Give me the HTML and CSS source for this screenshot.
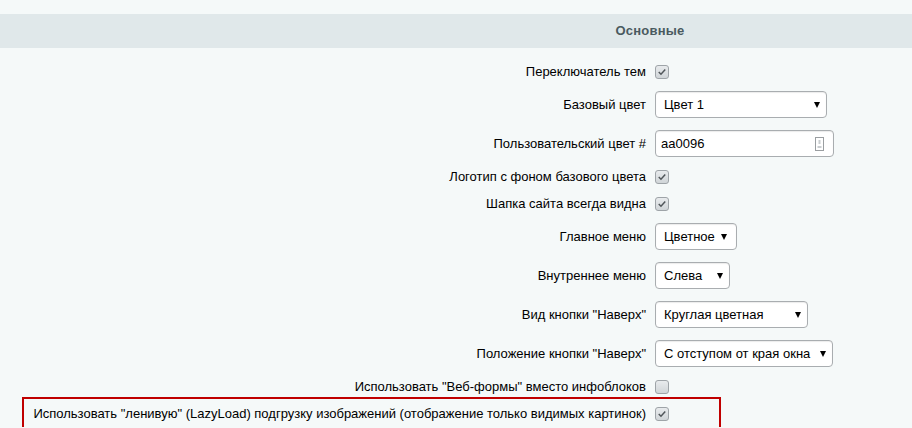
FILE: index.html
```html
<!DOCTYPE html>
<html lang="ru">
  <head>
    <meta charset="UTF-8" />
    <meta name="viewport" content="width=device-width, initial-scale=1.0" />
    <title>Настройки</title>
    <link rel="stylesheet" href="styles.css">
  </head>
  <body>
    <main class="settings">
      <div class="heading">Основные</div>

      <div class="row row-check">
        <div class="label">Переключатель тем</div>
        <div class="field"><span class="check checked"><svg viewBox="0 0 14 14"><path d="M3.2 7 L5.8 9.6 L10.8 4" /></svg></span></div>
      </div>
      <div class="row row-field">
        <div class="label">Базовый цвет</div>
        <div class="field"><div class="select w-base"><span>Цвет 1</span><i class="arrow"></i></div></div>
      </div>
      <div class="row row-field">
        <div class="label">Пользовательский цвет #</div>
        <div class="field">
          <div class="text-input">
            <span>aa0096</span>
            <svg class="picker" viewBox="0 0 9 14"><rect x="0.5" y="0.5" width="8" height="13" /><rect class="bar" x="3.5" y="3" width="2" height="4" /><path class="bar" d="M2.5 11 L2.5 9 L6.5 9 L6.5 11 Z" /></svg>
          </div>
        </div>
      </div>
      <div class="row row-check">
        <div class="label">Логотип с фоном базового цвета</div>
        <div class="field"><span class="check checked"><svg viewBox="0 0 14 14"><path d="M3.2 7 L5.8 9.6 L10.8 4" /></svg></span></div>
      </div>
      <div class="row row-check">
        <div class="label">Шапка сайта всегда видна</div>
        <div class="field"><span class="check checked"><svg viewBox="0 0 14 14"><path d="M3.2 7 L5.8 9.6 L10.8 4" /></svg></span></div>
      </div>
      <div class="row row-field">
        <div class="label">Главное меню</div>
        <div class="field"><div class="select w-main"><span>Цветное</span><i class="arrow"></i></div></div>
      </div>
      <div class="row row-field">
        <div class="label">Внутреннее меню</div>
        <div class="field"><div class="select w-inner"><span>Слева</span><i class="arrow"></i></div></div>
      </div>
      <div class="row row-field">
        <div class="label">Вид кнопки "Наверх"</div>
        <div class="field"><div class="select w-view"><span>Круглая цветная</span><i class="arrow"></i></div></div>
      </div>
      <div class="row row-field">
        <div class="label">Положение кнопки "Наверх"</div>
        <div class="field"><div class="select w-pos"><span>С отступом от края окна</span><i class="arrow"></i></div></div>
      </div>
      <div class="row row-check">
        <div class="label">Использовать "Веб-формы" вместо инфоблоков</div>
        <div class="field"><span class="check"></span></div>
      </div>
      <div class="row row-check marked">
        <div class="label">Использовать "ленивую" (LazyLoad) подгрузку изображений (отображение только видимых картинок)</div>
        <div class="field"><span class="check checked"><svg viewBox="0 0 14 14"><path d="M3.2 7 L5.8 9.6 L10.8 4" /></svg></span></div>
      </div>
    </main>
  </body>
</html>
```

FILE: styles.css
```css
* {
  margin: 0;
  padding: 0;
  box-sizing: border-box;
}

body {
  background-color: #f5f9f9;
  color: #000;
  font-family: "Liberation Sans", Arial, sans-serif;
  font-size: 13px;
  overflow: hidden;
}

.settings {
  padding-top: 14px;
}

.heading {
  height: 34px;
  line-height: 34px;
  padding-left: 388px;
  background-color: #e0e8ea;
  color: #4a5a60;
  font-weight: bold;
  text-align: center;
  letter-spacing: 0.2px;
  margin-bottom: 10px;
}

.row {
  display: flex;
  align-items: center;
}

.row-check {
  height: 27px;
}

.row-field {
  height: 39px;
}

.label {
  width: 650px;
  flex-shrink: 0;
  padding-right: 4px;
  text-align: right;
  white-space: nowrap;
}

.field {
  flex: 1;
  padding-left: 5px;
  display: flex;
  align-items: center;
}

/* checkboxes */
.check {
  display: block;
  width: 14px;
  height: 14px;
  border: 1px solid #9ea4a8;
  border-radius: 3px;
  background: linear-gradient(#e8ebed, #d0d5d8);
  & svg {
    display: block;
    width: 12px;
    height: 12px;
    fill: none;
    stroke: #50565a;
    stroke-width: 1.7;
  }
}

/* selects and inputs */
.select,
.text-input {
  height: 27px;
  display: flex;
  align-items: center;
  justify-content: space-between;
  background-color: #fff;
  border: 1px solid #a9adb0;
  border-radius: 4px;
  box-shadow: inset 0 1px 1px rgba(0, 0, 0, 0.08);
}

.select {
  padding: 0 6px 0 8px;
}

.arrow {
  width: 0;
  height: 0;
  border-left: 3.5px solid transparent;
  border-right: 3.5px solid transparent;
  border-top: 6px solid #000;
}

.w-base { width: 172px; }
.w-main { width: 82px; padding-right: 9px; }
.w-inner { width: 75px; }
.w-view { width: 153px; }
.w-pos { width: 178px; }

.text-input {
  width: 179px;
  padding: 0 9px 0 5px;
}

.picker {
  width: 9px;
  height: 14px;
  fill: none;
  stroke: #9a9ea1;
  stroke-width: 1;
  & .bar {
    fill: #c9cdd0;
    stroke: none;
  }
}

/* annotation frame */
.marked {
  position: relative;
  &::after {
    content: "";
    position: absolute;
    left: 22px;
    top: -3px;
    width: 695px;
    height: 30px;
    border: 2px solid #c00000;
    pointer-events: none;
  }
}
```
